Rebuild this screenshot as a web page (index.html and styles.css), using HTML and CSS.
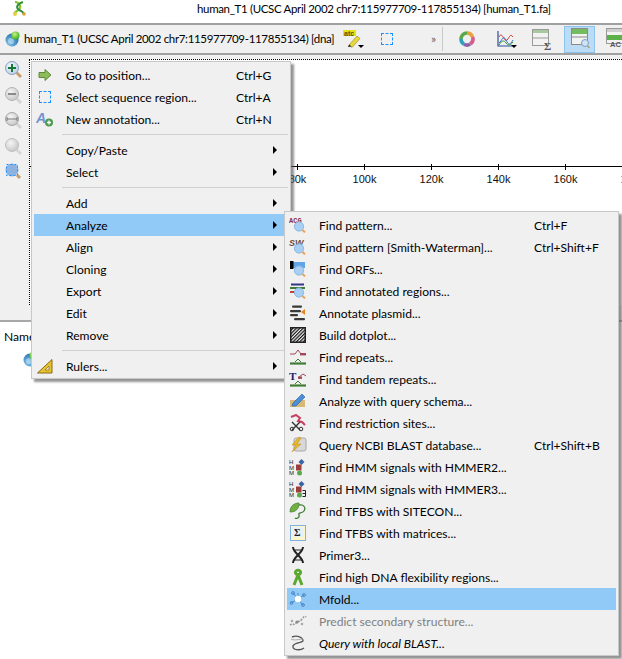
FILE: index.html
```html
<!DOCTYPE html>
<html lang="en">
<head>
<meta charset="utf-8">
<title>human_T1</title>
<link rel="stylesheet" href="styles.css">
</head>
<body>
<svg class="defs" width="0" height="0">
  <defs>
    <radialGradient id="gl" cx="40%" cy="35%" r="70%"><stop offset="0" stop-color="#f4f8fc"/><stop offset="1" stop-color="#b9cce4"/></radialGradient>
    <radialGradient id="gg" cx="40%" cy="35%" r="70%"><stop offset="0" stop-color="#f6f6f6"/><stop offset="1" stop-color="#c4c4c4"/></radialGradient>
    <radialGradient id="globe" cx="35%" cy="70%" r="75%"><stop offset="0" stop-color="#8cc8ee"/><stop offset="1" stop-color="#1a6ea8"/></radialGradient>
    <radialGradient id="ball" cx="40%" cy="35%" r="65%"><stop offset="0" stop-color="#c6f58a"/><stop offset="1" stop-color="#3fae1c"/></radialGradient>
    <pattern id="hatch" width="2.400" height="2.400" patternUnits="userSpaceOnUse" patternTransform="rotate(45)"><rect width="2.400" height="2.400" fill="#f4f4f4"/><rect width="1.200" height="2.400" fill="#111"/></pattern>
    <symbol id="lens" viewBox="0 0 18 18"><circle cx="10" cy="10.5" r="4.6" fill="#a9d0f2" stroke="#88b6e0"/><path d="M13.5 14l2.5 2.4" stroke="#e8a04c" stroke-width="2"/></symbol>
    <symbol id="globeicon" viewBox="0 0 16 16"><circle cx="7" cy="9" r="6.5" fill="url(#globe)"/><circle cx="6" cy="10" r="3" fill="#d5ebf8" opacity=".45"/><circle cx="10.5" cy="4.5" r="4" fill="url(#ball)"/></symbol>
    <symbol id="hmm" viewBox="0 0 18 18"><text x="0" y="6" class="tiny">H</text><text x="0" y="11.500" class="tiny">M</text><text x="0" y="17" class="tiny">M</text><path d="M12.500 1l3 3-3 3-3-3z" fill="#3b64a8"/><rect x="7" y="6.500" width="5.500" height="6" fill="#9c3c3c"/><circle cx="10.500" cy="15" r="2.500" fill="#5aa84a"/></symbol>
    <symbol id="nodes" viewBox="0 0 18 18"><g stroke="currentColor" fill="none"><path d="M9 9L4 3M9 9l6-4M9 9l-7 4M9 9l5 6M9 9v-6"/><circle cx="4" cy="3" r="1.400"/><circle cx="15" cy="5" r="1.400"/><circle cx="2.500" cy="13" r="1.400"/><circle cx="14" cy="15" r="1.400"/></g><circle cx="9" cy="9" r="3.200" fill="#fff"/></symbol>
  </defs>
</svg>

<header class="titlebar">
  <svg class="logo" width="14" height="16" viewBox="0 0 14 16"><path d="M3 1c3 0 6 3 5 6s-5 3-6 6" fill="none" stroke="#8ac32e" stroke-width="2.200"/><path d="M11 1C8 2 3 5 6 8s6 2 6 6" fill="none" stroke="#2f8f3a" stroke-width="2"/><circle cx="3" cy="13" r="2" fill="#e8d040"/><circle cx="12" cy="13" r="1.800" fill="#e0a030"/></svg>
  <span class="title">human_T1 (UCSC April 2002 chr7:115977709-117855134) [human_T1.fa]</span>
</header>

<div class="toolbar">
  <svg class="tb-globe" width="16" height="16"><use href="#globeicon"/></svg>
  <span class="tb-name">human_T1 (UCSC April 2002 chr7:115977709-117855134) [dna]</span>
  <svg class="tb-atc" width="20" height="20" viewBox="0 0 20 20"><rect x="0" y="1" width="13" height="6" fill="#e4e21a"/><text x="1" y="6.500" class="atc">atc</text><path d="M6 16l8-9 3 2.500-8 9z" fill="#e8d83a" stroke="#8c8420" stroke-width=".6"/><path d="M5 18l1-2.500 2.500 2z" fill="#222"/></svg>
  <i class="drop"></i>
  <span class="tb-select"></span>
  <span class="more">»</span>
  <span class="tb-sep"></span>
  <svg class="tb-ring" width="16" height="16" viewBox="0 0 16 16"><g fill="none" stroke-width="3.600"><path d="M8 2a6 6 0 0 1 5.600 4" stroke="#e6a23c"/><path d="M13.600 6a6 6 0 0 1-2.600 7" stroke="#d45d8c"/><path d="M11 13.200a6 6 0 0 1-6 0" stroke="#8a5fa8"/><path d="M5 13.200A6 6 0 0 1 2 8" stroke="#2f9fc0"/><path d="M2 8a6 6 0 0 1 6-6" stroke="#5aa84a"/></g></svg>
  <svg class="tb-chart" width="18" height="18" viewBox="0 0 18 18"><path d="M1 1v15h16" fill="none" stroke="#2a4fa0" stroke-width="1.200"/><path d="M2 7c3-7 5 6 8 3s3-7 6-3" fill="none" stroke="#d83030"/><path d="M2 13c3-2 4-9 7-3s4 5 7 0" fill="none" stroke="#3a70c8"/><path d="M2 15c3-5 5-5 7-2s5 2 7-1" fill="none" stroke="#3a9a3a"/></svg>
  <i class="drop chart-drop"></i>
  <svg class="tb-table" width="20" height="22" viewBox="0 0 20 22"><rect x=".5" y=".5" width="16" height="16" fill="#f2f2f2" stroke="#9a9a9a"/><rect x="1" y="1" width="15" height="3" fill="#a8c8a0"/><path d="M1 9h15" stroke="#9a9a9a"/><text x="12" y="21" class="sigma">Σ</text></svg>
  <span class="tb-active"><svg width="20" height="22" viewBox="0 0 20 22"><rect x=".5" y=".5" width="16" height="16" fill="#f2f2f2" stroke="#8a8a8a"/><rect x="1" y="1" width="15" height="5" fill="#74bc5e"/><path d="M1 9h15" stroke="#8a8a8a"/><circle cx="14" cy="15" r="3.500" fill="#cfe3f5" stroke="#7f9fbf"/><path d="M16.500 18l2 2" stroke="#b09870" stroke-width="1.500"/></svg></span>
  <svg class="tb-ac" width="16" height="22" viewBox="0 0 16 22"><rect x=".5" y=".5" width="18" height="15" fill="#f2f2f2" stroke="#9a9a9a"/><rect x="1" y="1" width="17" height="3" fill="#cfcfcf"/><rect x="1" y="7" width="17" height="5" fill="#5cb24a"/><text x="4" y="19" class="ac">AC</text></svg>
</div>

<main class="workarea">
  <aside class="rail">
    <svg width="20" height="20" viewBox="0 0 20 20"><path d="M12 12l5 5" stroke="#c8a070" stroke-width="3"/><circle cx="8" cy="8" r="6.500" fill="url(#gl)" stroke="#8aa3c0"/><path d="M8 4v8M4 8h8" stroke="#157a35" stroke-width="2"/></svg>
    <svg width="20" height="20" viewBox="0 0 20 20"><path d="M12 12l5 5" stroke="#d4d4d4" stroke-width="3"/><circle cx="8" cy="8" r="6.500" fill="url(#gg)" stroke="#b4b4b4"/><path d="M4 8h8" stroke="#8a8a8a" stroke-width="2"/></svg>
    <svg width="20" height="20" viewBox="0 0 20 20"><path d="M12 12l5 5" stroke="#d4d4d4" stroke-width="3"/><circle cx="8" cy="8" r="6.500" fill="url(#gg)" stroke="#a4a4a4"/><path d="M3 8h10M3 6v4M13 6v4" stroke="#7a7a7a"/></svg>
    <svg width="20" height="20" viewBox="0 0 20 20"><path d="M12 12l5 5" stroke="#d8d8d8" stroke-width="3"/><circle cx="8" cy="8" r="6.500" fill="url(#gg)" stroke="#c0c0c0"/></svg>
    <svg width="20" height="20" viewBox="0 0 20 20"><circle cx="8" cy="8" r="6.500" fill="#8db4e0"/><path d="M13 13l3 3" stroke="#c8a070" stroke-width="3"/><rect x="2.500" y="2.500" width="11" height="11" fill="none" stroke="#1e90ff" stroke-dasharray="2 2"/></svg>
  </aside>
  <section class="canvas">
    <div class="ruler">
      <span class="tick">80k</span><span class="tick">100k</span><span class="tick">120k</span><span class="tick">140k</span><span class="tick">160k</span><span class="tick end">180k</span>
    </div>
  </section>
</main>

<section class="bottom">
  <div class="name">Name</div>
  <svg class="tree-globe" width="16" height="16"><use href="#globeicon"/></svg>
</section>

<nav class="menu main-menu">
  <div class="row"><span class="ico"><svg width="14" height="12" viewBox="0 0 14 12"><path d="M1 3.500h6V.5L13 6l-6 5.500v-3H1z" fill="#8fbc5a" stroke="#5f8a38"/></svg></span><span class="label">Go to position...</span><span>Ctrl+G</span></div>
  <div class="row"><span class="ico"><span class="dash"></span></span><span class="label">Select sequence region...</span><span>Ctrl+A</span></div>
  <div class="row"><span class="ico"><svg width="18" height="16" viewBox="0 0 18 16"><text x="0" y="12" class="bigA">A</text><circle cx="13" cy="11.500" r="4" fill="#4e9a4e"/><path d="M13 9.500v4M11 11.500h4" stroke="#fff" stroke-width="1.300"/></svg></span><span class="label">New annotation...</span><span>Ctrl+N</span></div>
  <div class="sep"></div>
  <div class="row"><span class="ico"></span><span class="label">Copy/Paste</span><i class="arrow"></i></div>
  <div class="row"><span class="ico"></span><span class="label">Select</span><i class="arrow"></i></div>
  <div class="sep"></div>
  <div class="row"><span class="ico"></span><span class="label">Add</span><i class="arrow"></i></div>
  <div class="row on"><span class="ico"></span><span class="label">Analyze</span><i class="arrow"></i></div>
  <div class="row"><span class="ico"></span><span class="label">Align</span><i class="arrow"></i></div>
  <div class="row"><span class="ico"></span><span class="label">Cloning</span><i class="arrow"></i></div>
  <div class="row"><span class="ico"></span><span class="label">Export</span><i class="arrow"></i></div>
  <div class="row"><span class="ico"></span><span class="label">Edit</span><i class="arrow"></i></div>
  <div class="row"><span class="ico"></span><span class="label">Remove</span><i class="arrow"></i></div>
  <div class="sep"></div>
  <div class="row"><span class="ico"><svg width="16" height="15" viewBox="0 0 16 15"><path d="M15 .5V14H.5z" fill="#e6c22e" stroke="#8a6a10"/><path d="M12 7v4H8z" fill="#f0f0f0" stroke="#8a6a10" stroke-width=".7"/></svg></span><span class="label">Rulers...</span><i class="arrow"></i></div>
</nav>

<nav class="menu sub-menu">
  <div class="row"><span class="ico"><svg width="18" height="18" viewBox="0 0 18 18"><text x="0" y="7" class="acg">ACG</text><use href="#lens" width="18" height="18"/></svg></span><span class="label">Find pattern...</span><span>Ctrl+F</span></div>
  <div class="row"><span class="ico"><svg width="18" height="18" viewBox="0 0 18 18"><text x="0" y="8" class="sw">SW</text><use href="#lens" width="18" height="18"/></svg></span><span class="label">Find pattern [Smith-Waterman]...</span><span>Ctrl+Shift+F</span></div>
  <div class="row"><span class="ico"><svg width="18" height="18" viewBox="0 0 18 18"><rect x="1" y="2" width="15" height="6" fill="#5fa5e8"/><rect x="1" y="1" width="3.500" height="8" fill="#000"/><use href="#lens" width="18" height="18"/></svg></span><span class="label">Find ORFs...</span></div>
  <div class="row"><span class="ico"><svg width="18" height="18" viewBox="0 0 18 18"><rect x="2" y="1.500" width="13" height="2" fill="#34348a"/><rect x="1" y="5" width="15" height="2" fill="#3e7d34"/><rect x="1" y="9" width="10" height="2" fill="#c04040"/><use href="#lens" width="18" height="18"/></svg></span><span class="label">Find annotated regions...</span></div>
  <div class="row"><span class="ico"><svg width="18" height="18" viewBox="0 0 18 18"><g fill="#3a3a3a"><rect x="3" y="1.500" width="10" height="2.200" rx="1"/><rect x="1" y="6" width="11" height="2.200" rx="1"/><rect x="1" y="10" width="8" height="2.200" rx="1"/><rect x="5" y="14" width="11" height="2.200" rx="1"/></g><path d="M12 8l4-3v6z" fill="#e8841c"/></svg></span><span class="label">Annotate plasmid...</span></div>
  <div class="row"><span class="ico"><svg width="16" height="16" viewBox="0 0 16 16"><rect x=".75" y=".75" width="14.500" height="14.500" fill="url(#hatch)" stroke="#222" stroke-width="1.500"/></svg></span><span class="label">Build dotplot...</span></div>
  <div class="row"><span class="ico"><svg width="18" height="18" viewBox="0 0 18 18"><path d="M1 6h5l3-4 3 4h5" fill="none" stroke="#a04858"/><rect x="11" y="5" width="6" height="2.400" fill="#a04858"/><path d="M1 15.500h16" stroke="#3e7d34" stroke-width="2.200"/><path d="M6 14l3-3 3 3" fill="none" stroke="#3e7d34"/></svg></span><span class="label">Find repeats...</span></div>
  <div class="row"><span class="ico"><svg width="18" height="18" viewBox="0 0 18 18"><text x="0" y="10" class="tt">T</text><path d="M10 7l4-3 3 2" fill="none" stroke="#a04858"/><rect x="9" y="6.500" width="4" height="2.400" fill="#a04858"/><path d="M1 15.500h16" stroke="#3e7d34" stroke-width="2.200"/><path d="M6 14l3-3 3 3" fill="none" stroke="#3e7d34"/></svg></span><span class="label">Find tandem repeats...</span></div>
  <div class="row"><span class="ico"><svg width="18" height="18" viewBox="0 0 18 18"><rect x="1" y="8" width="15" height="7" fill="#d8b878"/><path d="M3 14l1-3L13 2l3 3-9 9z" fill="#4a90d8" stroke="#2a5a98" stroke-width=".6"/></svg></span><span class="label">Analyze with query schema...</span></div>
  <div class="row"><span class="ico"><svg width="18" height="18" viewBox="0 0 18 18"><path d="M2 3l5-2 4 3-2 3 4 1 3 3" fill="none" stroke="#c84060" stroke-width="2"/><path d="M3 8l8 8M11 8l-8 8" stroke="#333" stroke-width="1.400"/><circle cx="3" cy="15" r="1.800" fill="none" stroke="#333"/><circle cx="12" cy="15" r="1.800" fill="none" stroke="#333"/></svg></span><span class="label">Find restriction sites...</span></div>
  <div class="row"><span class="ico"><svg width="18" height="18" viewBox="0 0 18 18"><rect x="5" y="2" width="12" height="13" rx="2" fill="#d8d8d8" stroke="#a8a8a8"/><path d="M10 1L3 9h4l-4 7 9-8H8l4-6z" fill="#e8b828" stroke="#b8861c" stroke-width=".5"/></svg></span><span class="label">Query NCBI BLAST database...</span><span>Ctrl+Shift+B</span></div>
  <div class="row"><span class="ico"><svg width="18" height="18"><use href="#hmm"/></svg></span><span class="label">Find HMM signals with HMMER2...</span></div>
  <div class="row"><span class="ico"><svg width="18" height="18" viewBox="0 0 18 18"><use href="#hmm" width="18" height="18"/><path d="M13.500 10.500h3v6h-3M13.500 13.500h3" fill="none" stroke="#222"/></svg></span><span class="label">Find HMM signals with HMMER3...</span></div>
  <div class="row"><span class="ico"><svg width="18" height="18" viewBox="0 0 18 18"><path d="M1 10C1 4 5 1 10 1c0 6-3 9-9 9z" fill="#6fb03e" stroke="#3e7d34" stroke-width=".7"/><path d="M10 3c5-1 7 3 5 6s-6 1-5 4-3 4-4 3" fill="none" stroke="#3e7d34" stroke-width="1.300"/></svg></span><span class="label">Find TFBS with SITECON...</span></div>
  <div class="row"><span class="ico"><svg width="16" height="16" viewBox="0 0 16 16"><rect x=".5" y=".5" width="15" height="15" fill="#fbf6c8" stroke="#7fb2e0"/><rect x="2" y="2" width="12" height="10" fill="#e8f0f8"/><text x="4" y="11" class="sig2">Σ</text></svg></span><span class="label">Find TFBS with matrices...</span></div>
  <div class="row"><span class="ico"><svg width="14" height="18" viewBox="0 0 14 18"><path d="M2 1c0 6 10 10 10 16M12 1C12 7 2 11 2 17" fill="none" stroke="#222" stroke-width="2"/><path d="M4 4h6M3 14h8" stroke="#222"/></svg></span><span class="label">Primer3...</span></div>
  <div class="row"><span class="ico"><svg width="14" height="18" viewBox="0 0 14 18"><path d="M7 7c-3-1-3-3-2-4s3-1 4 0 1 3-2 4zM7 7l-4 10M7 7l4 10" fill="none" stroke="#5aa82e" stroke-width="3"/></svg></span><span class="label">Find high DNA flexibility regions...</span></div>
  <div class="row on"><span class="ico mfold"><svg width="18" height="18"><use href="#nodes"/></svg></span><span class="label">Mfold...</span></div>
  <div class="row off"><span class="ico"><svg width="18" height="16" viewBox="0 0 18 16"><path d="M1 12c3-2 3 1 6-2s3 0 6-4 3-1 4-3" fill="none" stroke="#9a9a9a" stroke-width="1.600" stroke-dasharray="2 1"/><circle cx="8" cy="9" r="1.600" fill="#8a8a8a"/><circle cx="3" cy="8" r="1.300" fill="#aaa"/><circle cx="13" cy="11" r="1.300" fill="#aaa"/></svg></span><span class="label">Predict secondary structure...</span></div>
  <div class="row ital"><span class="ico"><svg width="16" height="18" viewBox="0 0 16 18"><path d="M2 3c5-2 10 0 11 3s-9 2-10 6 7 5 11 2" fill="none" stroke="#555" stroke-width="1.400"/><path d="M1 5c4 2 8 0 12 0" fill="none" stroke="#aaa"/></svg></span><span class="label">Query with local BLAST...</span></div>
</nav>
</body>
</html>
```

FILE: styles.css
```css
* { box-sizing: border-box; }
html, body { margin: 0; padding: 0; }
body {
  position: relative;
  width: 622px;
  height: 659px;
  overflow: hidden;
  background: #fff;
  font: 12.1px/16px Lato, "Open Sans", sans-serif;
  color: #000;
}
.defs { position: absolute; }
.titlebar {
  display: flex;
  align-items: center;
  height: 23px;
  padding: 0 0 5px 12px;
}
.logo { flex: none; }
.title { margin-left: 171px; white-space: nowrap; font-size: 11.5px; letter-spacing: -.35px; }
.toolbar {
  display: flex;
  align-items: center;
  height: 32px;
  padding-left: 5px;
  background: #f0f0f0;
  border-top: 2px solid #a0a0a0;
  border-bottom: 2px solid #a0a0a0;
  overflow: hidden;
  white-space: nowrap;
}
.tb-globe { flex: none; }
.tb-name { margin-left: 3px; width: 316px; flex: none; font-size: 11.5px; letter-spacing: -.33px; }
.tb-atc { flex: none; margin-left: 3px; }
.drop {
  flex: none;
  width: 0;
  height: 0;
  margin: 14px 0 0 -5px;
  border: 3px solid transparent;
  border-top: 3px solid #000;
  border-bottom: 0;
}
.tb-select {
  flex: none;
  width: 12px;
  height: 12px;
  margin-left: 17px;
  border: 1px dashed #1e90ff;
}
.more { flex: none; margin-left: 38px; color: #666; font-size: 12px; }
.tb-sep { flex: none; width: 1px; height: 24px; margin-left: 6px; background: #c8c8c8; }
.tb-ring { flex: none; margin-left: 16px; }
.tb-chart { flex: none; margin-left: 22px; }
.chart-drop { margin-left: -4px; }
.tb-table { flex: none; margin-left: 15px; margin-top: 2px; }
.tb-active {
  flex: none;
  display: flex;
  align-items: center;
  justify-content: center;
  width: 31px;
  height: 27px;
  margin-left: 12px;
  padding-left: 2px;
  background: #bcdcf5;
  border: 1px solid #8cc4f0;
}
.tb-ac { flex: none; margin-left: 11px; }
.atc { font: bold 7px "Liberation Sans", sans-serif; fill: #5a5000; }
.sigma { font: bold 11px "Liberation Serif", serif; fill: #555; }
.ac { font: bold 7.5px "Liberation Sans", sans-serif; fill: #555; }
.workarea {
  display: flex;
  height: 267px;
  background: #f0f0f0;
  border-bottom: 2px solid #a8a8a8;
}
.rail {
  flex: none;
  display: flex;
  flex-direction: column;
  gap: 5.500px;
  width: 29px;
  padding: 5px 0 0 4px;
}
.canvas {
  flex: 1;
  height: 246px;
  margin-top: 4px;
  background: #fff;
  border-top: 1px dotted #000;
  border-left: 1px dotted #000;
  overflow: hidden;
}
.ruler {
  display: flex;
  width: 700px;
  height: 20px;
  margin-top: 106px;
  padding-left: 234px;
  border-top: 1px solid #000;
}
.tick {
  position: relative;
  flex: none;
  width: 67px;
  padding-top: 5px;
  font: 11px/14px "Liberation Sans", sans-serif;
  text-align: center;
  color: #111;
}
.tick::before {
  content: "";
  position: absolute;
  top: -3px;
  left: 33px;
  width: 1px;
  height: 6px;
  background: #000;
}
.tick.end { color: #a00; }
.bottom { position: relative; padding: 7px 0 0 4px; }
.name { height: 16px; }
.tree-globe { display: block; margin: 6px 0 0 19px; }
.menu {
  position: absolute;
  background: #f0f0f0;
  border: 1px solid #c8c8c8;
  box-shadow: 3px 3px 2px rgba(90, 90, 90, .65);
  white-space: nowrap;
}
.main-menu { left: 31px; top: 61px; width: 260px; padding: 2px 2px 1px; }
.sub-menu { left: 284px; top: 211px; width: 335px; padding: 2px 2px 1px; }
.row { display: flex; align-items: center; height: 22px; padding-top: 2px; }
.row.on { background: #91c9f7; }
.row.off { color: #808080; }
.row.ital { font-style: italic; }
.ico {
  flex: none;
  display: flex;
  align-items: center;
  justify-content: center;
  width: 22px;
  height: 20px;
  margin-top: -2px;
  margin-right: 10px;
}
.ico svg { display: block; }
.label { flex: none; width: 170px; }
.sub-menu .label { width: 215px; }
.arrow {
  flex: none;
  width: 0;
  height: 0;
  margin: -2px 11px 0 auto;
  border-left: 4px solid #000;
  border-top: 4px solid transparent;
  border-bottom: 4px solid transparent;
}
.sep { height: 9px; margin-left: 28px; padding-top: 4px; }
.sep::before { content: ""; display: block; height: 1px; background: #d0d0d0; }
.dash { width: 12px; height: 12px; border: 1px dashed #1e90ff; }
.mfold { color: #4a86c8; }
.bigA { font: italic bold 14px "Liberation Sans", sans-serif; fill: #6f93d0; }
.acg { font: bold 7px "Liberation Mono", monospace; fill: #8a3048; }
.sw { font: italic bold 9px "Liberation Sans", sans-serif; fill: #6a4a3a; }
.tt { font: bold 11px "Liberation Serif", serif; fill: #20206a; }
.tiny { font: 6px "Liberation Sans", sans-serif; fill: #222; }
.sig2 { font: bold 10px "Liberation Serif", serif; fill: #222; }
```
